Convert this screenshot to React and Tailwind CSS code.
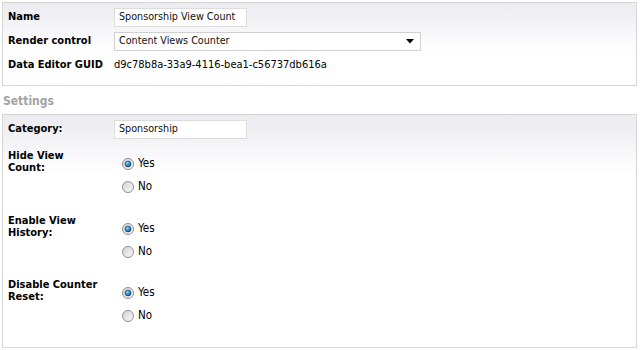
import React from 'react';

const Radio = ({ checked }) => (
  <svg width="12" height="12" viewBox="0 0 12 12" className="shrink-0">
    <defs>
      <linearGradient id="rOuter" x1="0" y1="0" x2="1" y2="1">
        <stop offset="0" stopColor="#d2d2d2" />
        <stop offset="1" stopColor="#fbfbfb" />
      </linearGradient>
      <radialGradient id="rDot" cx="0.4" cy="0.35" r="0.7">
        <stop offset="0" stopColor="#8fdcff" />
        <stop offset="0.5" stopColor="#2e8fcf" />
        <stop offset="1" stopColor="#0c3d6b" />
      </radialGradient>
    </defs>
    <circle cx="6" cy="6" r="5.5" fill="url(#rOuter)" stroke="#8f9193" strokeWidth="1" />
    {checked && <circle cx="6" cy="6" r="3" fill="url(#rDot)" stroke="#1c3f5e" strokeWidth="0.6" />}
  </svg>
);

const RadioGroup = ({ label, value }) => (
  <div className="flex h-[64.5px]">
    <div className="w-[106px] pt-[1px] font-bold text-[11px] leading-[12px]">{label}</div>
    <div className="flex flex-col pt-[3.5px] pl-[8px]">
      <label className="flex h-[23px] items-center gap-[4px] text-[11.5px]">
        <Radio checked={value === 'yes'} />
        <span>Yes</span>
      </label>
      <label className="flex h-[23px] items-center gap-[4px] text-[11.5px]">
        <Radio checked={value === 'no'} />
        <span>No</span>
      </label>
    </div>
  </div>
);

const TextBox = ({ value, width }) => (
  <div className={`flex h-[19px] ${width} items-center border border-[#dcdcdc] bg-white pl-[4px] text-[10.7px] text-[#111]`}>
    {value}
  </div>
);

const App = () => {
  return (
    <div className="min-h-[350px] w-[640px] bg-white pt-[2px] pl-[2px] font-['DejaVu_Sans_Condensed','Liberation_Sans',sans-serif] text-black">
      <div className="w-[635px] border border-[#d6d6d6] bg-[linear-gradient(to_bottom,#ebebf0,#ffffff_48px)] pt-[5px] pb-[15px] pl-[5px]">
        <div className="flex flex-col gap-[5px]">
          <div className="flex h-[19px]">
            <div className="w-[106px] pt-[2px] font-bold text-[11px] leading-[13px]">Name</div>
            <TextBox value="Sponsorship View Count" width="w-[133px]" />
          </div>
          <div className="flex h-[19px]">
            <div className="w-[106px] pt-[2px] font-bold text-[11px] leading-[13px]">Render control</div>
            <div className="flex h-[19px] w-[307px] items-center justify-between border border-[#d0d0d0] bg-white pl-[4px] pr-[6px] text-[10.7px] text-[#111]">
              <span>Content Views Counter</span>
              <svg width="8" height="5" viewBox="0 0 8 5">
                <path d="M0 0 H8 L4 4.5 Z" fill="#000" />
              </svg>
            </div>
          </div>
          <div className="flex h-[14px] pt-[2px]">
            <div className="w-[106px] font-bold text-[11px] leading-[13px]">Data Editor GUID</div>
            <div className="text-[11px] leading-[13px]">d9c78b8a-33a9-4116-bea1-c56737db616a</div>
          </div>
        </div>
      </div>

      <div className="mt-[8px] pl-[1px] font-bold text-[12px] leading-[15px] text-[#a3a3a3]">Settings</div>

      <div className="mt-[5px] w-[635px] border border-[#d6d6d6] bg-[linear-gradient(to_bottom,#ebebf0,#ffffff_60px)] pt-[5px] pb-[4.5px] pl-[5px]">
        <div className="flex h-[19px]">
          <div className="w-[106px] pt-[2px] font-bold text-[11px] leading-[13px]">Category:</div>
          <TextBox value="Sponsorship" width="w-[133px]" />
        </div>
        <div className="mt-[10px] flex flex-col">
          <RadioGroup label={<>Hide View<br />Count:</>} value="yes" />
          <RadioGroup label={<>Enable View<br />History:</>} value="yes" />
          <RadioGroup label={<>Disable Counter<br />Reset:</>} value="yes" />
        </div>
      </div>
    </div>
  );
};

export default App;
